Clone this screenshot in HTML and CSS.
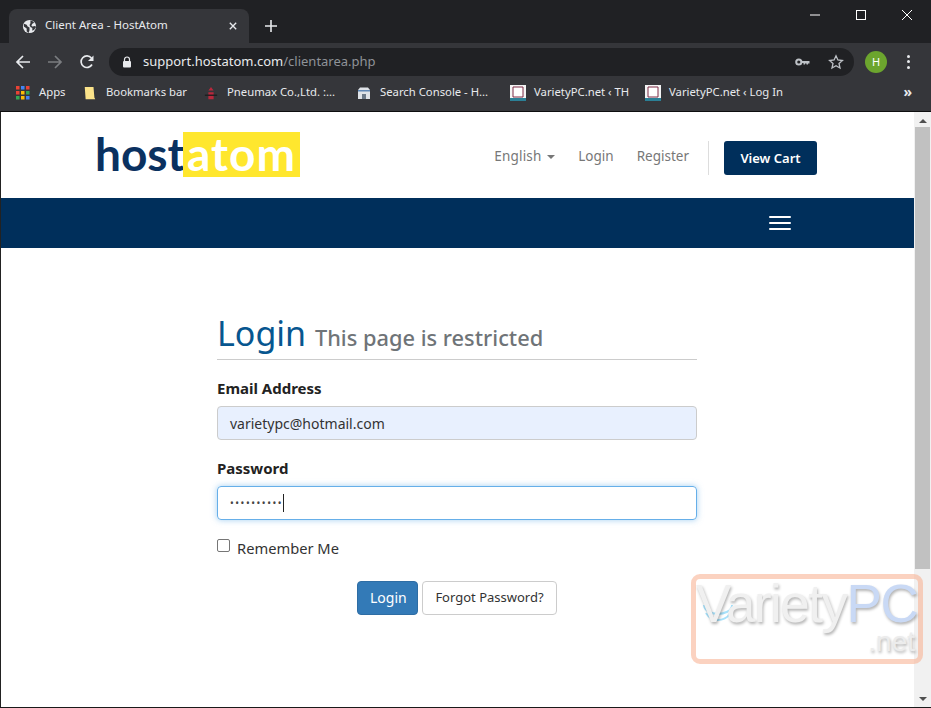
FILE: index.html
```html
<!DOCTYPE html>
<html lang="en">
<head>
<meta charset="utf-8">
<title>Client Area - HostAtom</title>
<link rel="stylesheet" href="styles.css">
</head>
<body>
<div class="window">
  <div class="tabstrip">
    <div class="tab">
      <svg class="globe" viewBox="0 0 16 16"><circle cx="8" cy="8" r="7" fill="#e8eaed"/><path d="M2 5l3 1 1 2 2 1v3l-1 3-2-2V10L2 8zM9 1.500l2 .5 2 2-2 1-1 2 1 1 3-.5 1 1-2 3-2 1 0-3-2-1-1-2 1-2z" fill="#35363a"/></svg>
      <span class="tab-title">Client Area - HostAtom</span>
      <svg class="tab-close" viewBox="0 0 10 10"><path d="M1 1l8 8M9 1l-8 8" stroke="#e8eaed" stroke-width="1.700"/></svg>
    </div>
    <svg class="new-tab" viewBox="0 0 12 12"><path d="M6 0v12M0 6h12" stroke="#e8eaed" stroke-width="1.600"/></svg>
    <div class="win-controls">
      <svg class="win-btn" viewBox="0 0 46 20"><path d="M18 10h10" stroke="#fff" stroke-width="1"/></svg>
      <svg class="win-btn" viewBox="0 0 46 20"><rect x="18.500" y="5.500" width="9" height="9" fill="none" stroke="#fff"/></svg>
      <svg class="win-btn" viewBox="0 0 46 20"><path d="M18 5l10 10M28 5l-10 10" stroke="#fff"/></svg>
    </div>
  </div>
  <div class="toolbar">
    <svg class="nav-icon" viewBox="0 0 16 16"><path d="M15 8H2M8 2L2 8l6 6" fill="none" stroke="#e8eaed" stroke-width="1.700"/></svg>
    <svg class="nav-icon" viewBox="0 0 16 16"><path d="M1 8h13M8 2l6 6-6 6" fill="none" stroke="#7b7d80" stroke-width="1.700"/></svg>
    <svg class="nav-icon" viewBox="0 0 16 16"><path d="M13 10.500A5.800 5.800 0 1 1 12.400 4" fill="none" stroke="#e8eaed" stroke-width="1.700"/><path d="M14.500 1.500v5.500H9z" fill="#e8eaed"/></svg>
    <div class="omnibox">
      <svg class="lock" viewBox="0 0 10 12"><path d="M2.500 5V3.500a2.500 2.500 0 0 1 5 0V5" fill="none" stroke="#e8eaed" stroke-width="1.200"/><rect x="1" y="5" width="8" height="6.500" rx="1" fill="#e8eaed"/></svg>
      <span class="url"><span class="url-host">support.hostatom.com</span>/clientarea.php</span>
      <svg class="key" viewBox="0 0 15 8"><circle cx="3.800" cy="4" r="2.600" fill="none" stroke="#bdc1c6" stroke-width="2"/><path d="M6 3h8.500v2.500h-1.500v1h-1.500v-1H10v1H8.500V5H6z" fill="#bdc1c6"/></svg>
      <svg class="star" viewBox="0 0 16 16"><path d="M8 1.800l1.900 4.200 4.500.5-3.400 3 1 4.500L8 11.700 4 14l1-4.500-3.400-3 4.500-.5z" fill="none" stroke="#bdc1c6" stroke-width="1.300"/></svg>
    </div>
    <div class="avatar">H</div>
    <div class="menu-dots"><i></i><i></i><i></i></div>
  </div>
  <div class="bookmarks">
    <div class="bm bm-apps">
      <svg class="bm-icon" viewBox="0 0 14 14"><g><rect x="0" y="0" width="3.500" height="3.500" fill="#ea4335"/><rect x="5" y="0" width="3.500" height="3.500" fill="#4285f4"/><rect x="10" y="0" width="3.500" height="3.500" fill="#ea4335"/><rect x="0" y="5" width="3.500" height="3.500" fill="#ea4335"/><rect x="5" y="5" width="3.500" height="3.500" fill="#fbbc05"/><rect x="10" y="5" width="3.500" height="3.500" fill="#34a853"/><rect x="0" y="10" width="3.500" height="3.500" fill="#34a853"/><rect x="5" y="10" width="3.500" height="3.500" fill="#fbbc05"/><rect x="10" y="10" width="3.500" height="3.500" fill="#4285f4"/></g></svg>
      <span>Apps</span>
    </div>
    <div class="bm bm-folder">
      <svg class="bm-icon" viewBox="0 0 14 16"><path d="M1 1h10l1 12 1 2H2z" fill="#fbe38a"/></svg>
      <span>Bookmarks bar</span>
    </div>
    <div class="bm bm-pneumax">
      <svg class="bm-icon" viewBox="0 0 14 16"><path d="M7 1l3 4H4zM4 7h6v3H4zM4 11h6v4H4z" fill="#b8283c"/><path d="M0 10.500h14" stroke="#111"/></svg>
      <span>Pneumax Co.,Ltd. :...</span>
    </div>
    <div class="bm bm-search">
      <svg class="bm-icon" viewBox="0 0 14 14"><path d="M1 4l2-2.500h8L13 4v9H1z" fill="#dfe3e8"/><path d="M1 4h12v1.500H1z" fill="#5f87b5"/><path d="M5 8h4v5H5z" fill="#6c7a89"/></svg>
      <span>Search Console - H...</span>
    </div>
    <div class="bm bm-variety">
      <svg class="bm-icon bm-icon-large" viewBox="0 0 16 16"><rect width="16" height="16" fill="#f4f4f4"/><path d="M3 2h10v10H3z" fill="#fff" stroke="#7c2a44"/><rect y="13" width="16" height="3" fill="#2b7f95"/></svg>
      <span>VarietyPC.net ‹ TH</span>
    </div>
    <div class="bm bm-login">
      <svg class="bm-icon bm-icon-large" viewBox="0 0 16 16"><rect width="16" height="16" fill="#f4f4f4"/><path d="M3 2h10v10H3z" fill="#fff" stroke="#7c2a44"/><rect y="13" width="16" height="3" fill="#2b7f95"/></svg>
      <span>VarietyPC.net ‹ Log In</span>
    </div>
    <span class="bm-more">»</span>
  </div>
  <div class="viewport">
    <main class="page">
      <header class="site-header">
        <div class="logo"><span class="logo-host">host</span><span class="logo-atom">atom</span></div>
        <nav class="top-nav">
          <a class="lang">English <i class="caret"></i></a>
          <a>Login</a>
          <a>Register</a>
          <span class="divider"></span>
          <a class="cart">View Cart</a>
        </nav>
      </header>
      <div class="navbar"><div class="burger"><i></i><i></i><i></i></div></div>
      <section class="login">
        <h1 class="page-title">Login <small>This page is restricted</small></h1>
        <label class="field-label">Email Address</label>
        <div class="input input-filled">varietypc@hotmail.com</div>
        <label class="field-label field-password">Password</label>
        <div class="input input-focus"><span class="dots">••••••••••</span><span class="cursor"></span></div>
        <div class="remember"><span class="checkbox"></span><span>Remember Me</span></div>
        <div class="actions"><button class="btn btn-primary">Login</button><button class="btn btn-default">Forgot Password?</button></div>
      </section>
    </main>
    <div class="scrollbar">
      <span class="arrow arrow-up"></span>
      <div class="thumb"></div>
      <span class="arrow arrow-down"></span>
    </div>
    <div class="watermark">
      <svg class="wm-swoosh" viewBox="0 0 30 22"><path d="M1 5c0 6 8 9 14 9s14-3 14-9M3 13c3 5 8 7 12 7s10-2 12-7" fill="none" stroke="#a8e2fb" stroke-width="2"/></svg>
      <div class="wm-main">Variety<span class="wm-pc">PC</span></div>
      <div class="wm-net">.net</div>
    </div>
  </div>
</div>
</body>
</html>
```
FILE: styles.css
```css
* { box-sizing: border-box; }
html, body { margin: 0; padding: 0; }
body { width: 931px; height: 708px; overflow: hidden; font-family: "Noto Sans", sans-serif; background: #fff; }
.window { width: 931px; height: 708px; display: flex; flex-direction: column; background: #202124; }

.tabstrip { height: 43px; flex: none; display: flex; align-items: flex-end; padding-left: 9px; position: relative; background: #202124; }
.tab { width: 240px; height: 34px; background: #35363a; border-radius: 8px 8px 0 0; display: flex; align-items: center; padding: 0 12px 0 13px; color: #e8eaed; font: 12px "Noto Sans", sans-serif; }
.globe { width: 15px; height: 15px; flex: none; margin-right: 8px; }
.tab-title { flex: 1; font-size: 11.500px; margin-top: -3px; }
.tab-close { width: 8px; height: 8px; flex: none; }
.new-tab { width: 12px; height: 12px; margin: 0 0 11px 16px; }
.win-controls { position: absolute; top: 5px; right: 1px; display: flex; }
.win-btn { width: 46px; height: 20px; display: block; }

.toolbar { height: 37px; flex: none; background: #35363a; display: flex; align-items: center; padding-left: 15px; }
.nav-icon { width: 16px; height: 16px; flex: none; margin-right: 16px; }
.omnibox { width: 745px; height: 28px; margin-left: -2px; border-radius: 14px; background: #202124; display: flex; align-items: center; padding: 0 10px 0 13px; }
.lock { width: 10px; height: 12px; flex: none; margin-right: 11px; }
.url { flex: 1; color: #8f9398; font: 13px "Noto Sans", sans-serif; margin-top: -2px; }
.url-host { color: #e8eaed; }
.key { width: 15px; height: 8px; margin-right: 18px; }
.star { width: 16px; height: 16px; }
.avatar { width: 22px; height: 22px; border-radius: 50%; margin-left: 11px; background: #6ca52e; color: #fff; font: 11px/22px "Noto Sans", sans-serif; text-align: center; flex: none; }
.menu-dots { margin-left: 20px; display: flex; flex-direction: column; gap: 2.500px; }
.menu-dots i { width: 3px; height: 3px; border-radius: 50%; background: #e8eaed; display: block; }

.bookmarks { height: 32px; flex: none; background: #35363a; border-bottom: 1px solid #0e0e0f; display: flex; align-items: center; padding: 0 0 5px 16px; color: #e8eaed; font: 11.300px "Noto Sans", sans-serif; position: relative; }
.bm { display: flex; align-items: center; gap: 9px; white-space: nowrap; flex: none; }
.bm span { margin-top: -3px; }
.bm-icon { width: 14px; height: 14px; flex: none; }
.bm-icon-large { width: 16px; height: 16px; margin-right: -1px; }
.bm-apps { width: 67px; }
.bm-folder { width: 121px; }
.bm-pneumax { width: 153px; }
.bm-search { width: 153px; }
.bm-variety { width: 135px; }
.bm-login { width: 150px; }
.bm-more { position: absolute; right: 19px; top: 2px; font-size: 14px; font-weight: bold; }

.viewport { flex: 1; display: flex; position: relative; min-height: 0; background: #fff; border-bottom: 1px solid #1a1a1a; }
.page { flex: 1; min-width: 0; border-left: 1px solid #222; overflow: hidden; }
.site-header { height: 86px; display: flex; justify-content: space-between; padding: 20px 97px 0 96px; }
.logo { display: flex; height: 45px; align-items: stretch; font-family: Lato, sans-serif; font-weight: 700; font-size: 46px; line-height: 44px; }
.logo-host { color: #0a3160; width: 86px; text-indent: -2px; }
.logo-atom { width: 117px; background: #ffe72e; color: #fff; text-align: center; letter-spacing: 1px; font-weight: 700; }
.top-nav { display: flex; align-items: flex-start; height: 34px; margin-top: 9px; font-size: 13.500px; color: #777; }
.top-nav a { margin-right: 23px; line-height: 31px; }
.top-nav .lang { margin-left: -2px; letter-spacing: .2px; }
.caret { display: inline-block; width: 0; height: 0; border: 4px solid transparent; border-top-color: #777; border-bottom: 0; vertical-align: middle; margin-left: 2px; }
.divider { width: 1px; height: 34px; background: #ddd; margin-right: 15px; margin-left: -4px; }
.top-nav .cart { width: 93px; height: 34px; margin: 0; background: #002f5b; color: #fff; font-weight: 600; font-size: 13px; line-height: 34px; text-align: center; border-radius: 3px; }

.navbar { height: 50px; background: #002f5b; position: relative; display: flex; justify-content: flex-end; align-items: center; padding-right: 123px; }
.burger { display: flex; flex-direction: column; gap: 4px; width: 22px; }
.burger i { display: block; height: 2px; background: #fff; border-radius: 1px; }

.login { width: 480px; margin-left: 216px; padding-top: 62px; }
.page-title { margin: 0 0 20px; padding-bottom: 3px; border-bottom: 1px solid #ccc; font-size: 34px; font-weight: 400; line-height: 46px; height: 50px; color: #07568f; }
.page-title small { font-size: 21.800px; color: #6f7478; font-weight: 500; }
.field-label { display: block; font-size: 15px; font-weight: 700; color: #222; line-height: 16px; padding-bottom: 2px; }
.field-password { margin-top: 20px; }
.input { height: 34px; margin-top: 8px; border: 1px solid #ccc; border-radius: 4px; padding: 1px 12px 0; font-size: 14px; line-height: 32px; color: #333; }
.input-filled { background: #e8f0fe; }
.input-focus { border-color: #66afe9; padding-top: 0; box-shadow: 0 0 6px rgba(102,175,233,.6); display: flex; align-items: center; }
.dots { font-size: 10px; letter-spacing: 1.550px; color: #444; }
.cursor { width: 1px; height: 18px; background: #222; }
.remember { display: flex; align-items: flex-start; margin-top: 19px; height: 20px; color: #333; font-size: 14.700px; line-height: 18px; }
.checkbox { width: 13px; height: 13px; border: 1px solid #767676; border-radius: 2px; margin: 0 7px 0 0; background: #fff; }
.actions { display: flex; justify-content: center; gap: 4px; margin-top: 22px; }
.btn { height: 34px; border-radius: 4px; font: 400 13px "Noto Sans", sans-serif; padding: 0 12px 2px; }
.btn-primary { width: 61px; background: #337ab7; border: 1px solid #2e6da4; color: #fff; font-size: 14px; }
.btn-default { width: 135px; background: #fff; border: 1px solid #ccc; color: #333; }

.scrollbar { width: 17px; flex: none; background: #f1f1f1; display: flex; flex-direction: column; align-items: center; }
.thumb { width: 15px; height: 442px; margin-top: 4px; background: #c1c1c1; }
.arrow { width: 0; height: 0; border: 4px solid transparent; flex: none; }
.arrow-up { border-bottom: 4px solid #505050; border-top: 0; margin-top: 7px; }
.arrow-down { border-top: 4px solid #505050; border-bottom: 0; margin-top: auto; margin-bottom: 6px; }

.watermark { position: absolute; left: 691px; top: 462px; width: 232px; height: 90px; border: 5px solid rgba(248,180,150,.6); border-radius: 9px; font-family: "Liberation Sans", Arial, sans-serif; text-align: right; padding-right: 3px; }
.wm-swoosh { position: absolute; left: 7px; top: 21px; width: 30px; height: 22px; }
.wm-main { font-size: 53px; line-height: 50px; letter-spacing: -1.500px; color: #f0f0f0; text-shadow: 1px 2px 3px rgba(0,0,0,.3); white-space: nowrap; position: relative; }
.wm-pc { color: #c9d9f5; }
.wm-net { font-size: 28px; line-height: 26px; color: #ececec; text-shadow: 1px 2px 3px rgba(0,0,0,.3); }
```
